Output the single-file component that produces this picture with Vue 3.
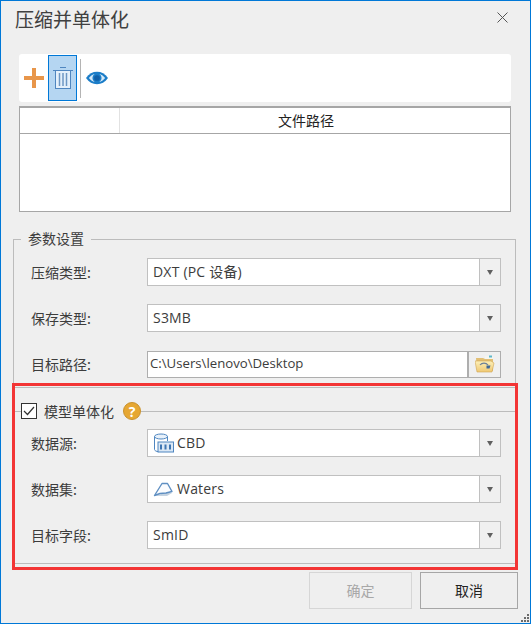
<template>
  <div class="window">
    <div class="title-row">
      <span class="title">压缩并单体化</span>
      <svg class="close" width="11" height="11" viewBox="0 0 11 11"><path d="M.5.5l10 10M10.5.5l-10 10" stroke="#555" fill="none" /></svg>
    </div>

    <div class="toolbar">
      <button class="tool add">
        <svg width="20" height="20" viewBox="0 0 20 20"><path d="M8 0h4v8h8v4h-8v8H8v-8H0V8h8z" fill="#e8964a" /></svg>
      </button>
      <button class="tool del">
        <svg width="20" height="22" viewBox="0 0 20 22" fill="none" stroke="#4f86c0">
          <path d="M0 3.500h20M7 .5h6" />
          <rect x="2.500" y="3.500" width="15" height="18" fill="#e4f0fb" />
          <path d="M6.500 6v13M10 6v13M13.500 6v13" stroke="#6d97c4" stroke-width="1.500" />
        </svg>
      </button>
      <span class="tool-sep"></span>
      <button class="tool eye">
        <svg width="23" height="14" viewBox="0 0 23 14">
          <path d="M0 7C3 2.500 7 .5 11.500 .5S20 2.500 23 7c-3 4.500-7 6.500-11.500 6.500S3 11.500 0 7z" fill="#1b7dc8" />
          <path d="M3 7c2-2.500 4-3.800 6-4.200A5 5 0 0 0 9 11.200C7 10.800 5 9.500 3 7zM20 7c-2-2.500-4-3.800-6-4.200a5 5 0 0 1 0 8.400c2-.4 4-1.700 6-4.200z" fill="#d6e9f7" />
          <circle cx="11.500" cy="7" r="3" fill="#0f5fa8" />
        </svg>
      </button>
    </div>

    <div class="file-table">
      <div class="table-head">
        <div class="col-index"></div>
        <div class="col-path">文件路径</div>
      </div>
    </div>

    <fieldset class="group">
      <legend class="legend-text">参数设置</legend>
      <div class="field" v-for="f in params" :key="f.label">
        <label>{{ f.label }}</label>
        <div class="combo">
          <span class="value">{{ f.value }}</span>
          <span class="arrow-btn"><i class="arrow"></i></span>
        </div>
      </div>
      <div class="field">
        <label>目标路径:</label>
        <div class="path-input">
          <span class="path-value">C:\Users\lenovo\Desktop</span>
          <span class="folder-btn">
            <svg width="20" height="20" viewBox="0 0 20 20">
              <defs>
                <linearGradient id="fold" x1="0" y1="0" x2="0" y2="1">
                  <stop offset="0" stop-color="#fdf0b8" />
                  <stop offset="1" stop-color="#efc873" />
                </linearGradient>
              </defs>
              <path d="M1 4h7l2 1h8v12H2z" fill="#e2bf74" />
              <path d="M10 2h7l1 3h-8z" fill="#f5f5ef" />
              <rect x="14" y="1.500" width="3" height="2" fill="#5fb7c9" />
              <path d="M0 7h16l3 2-2 9H2z" fill="url(#fold)" stroke="#d0a656" stroke-width=".6" />
              <path d="M5 11c2-2.500 6-2.500 8 0" fill="none" stroke="#6a7f98" stroke-width="1.200" />
              <path d="M11.500 11.500h4l-1 3h-3z" fill="#3f6796" />
            </svg>
          </span>
        </div>
      </div>
    </fieldset>

    <fieldset class="group model">
      <legend class="legend-check">
        <span class="check">
          <svg width="12" height="10" viewBox="0 0 12 10"><path d="M1 5l3.500 3.500L11 1" fill="none" stroke="#333" stroke-width="1.200" /></svg>
        </span>
        <span class="check-label">模型单体化</span>
        <span class="help">?</span>
      </legend>
      <div class="field">
        <label>数据源:</label>
        <div class="combo">
          <svg class="item-icon" width="21" height="20" viewBox="0 0 21 20" fill="none" stroke="#4f86c0">
            <ellipse cx="8" cy="3.500" rx="6.500" ry="2.500" fill="#e8f1fa" />
            <path d="M1.500 3.500v13c0 1.200 2 2 4 2.200M14.500 3.500V8" />
            <rect x="5" y="9" width="15.500" height="10" fill="#dbe8f5" />
            <path d="M8 11.500v5M12.500 11.500v5M17 11.500v5" stroke="#3f76b2" stroke-width="2" />
          </svg>
          <span class="value">CBD</span>
          <span class="arrow-btn"><i class="arrow"></i></span>
        </div>
      </div>
      <div class="field">
        <label>数据集:</label>
        <div class="combo">
          <svg class="item-icon" width="21" height="16" viewBox="0 0 21 16">
            <path d="M1 15h13l5-3-7 0z" fill="#c4d2e0" />
            <path d="M1.500 14.500L9 2.500h5.500l4.500 8-6 1.500-6 .5z" fill="#fbfcfe" stroke="#5f8fc2" stroke-width="1.400" stroke-linejoin="round" />
          </svg>
          <span class="value">Waters</span>
          <span class="arrow-btn"><i class="arrow"></i></span>
        </div>
      </div>
      <div class="field">
        <label>目标字段:</label>
        <div class="combo">
          <span class="value">SmID</span>
          <span class="arrow-btn"><i class="arrow"></i></span>
        </div>
      </div>
    </fieldset>

    <div class="actions">
      <button class="btn ok" disabled>确定</button>
      <button class="btn cancel">取消</button>
    </div>

    <div class="red-frame"></div>
    <svg class="grip" width="10" height="10" viewBox="0 0 10 10" fill="#6b6b6b">
      <rect x="7" y="1" width="2" height="2" />
      <rect x="4" y="4" width="2" height="2" />
      <rect x="7" y="4" width="2" height="2" />
      <rect x="1" y="7" width="2" height="2" />
      <rect x="4" y="7" width="2" height="2" />
      <rect x="7" y="7" width="2" height="2" />
    </svg>
  </div>
</template>

<script setup>
const params = [
  { label: '压缩类型:', value: 'DXT (PC 设备)' },
  { label: '保存类型:', value: 'S3MB' },
]
</script>

<style scoped>
.window {
  position: relative;
  box-sizing: border-box;
  width: 531px;
  height: 624px;
  border: 1px solid #0078d7;
  border-left-width: 1.500px;
  background: #efefef;
  color: #3c3c3c;
  font-family: "Open Sans", "Noto Sans CJK SC", sans-serif;
  font-size: 14px;
  overflow: hidden;
}

.title-row {
  display: flex;
  box-sizing: border-box;
  justify-content: space-between;
  align-items: flex-start;
  height: 53px;
  padding: 5px 22px 0 14px;
}

.title {
  font-family: "Noto Sans CJK SC", sans-serif;
  font-size: 19px;
  line-height: 26px;
  color: #404040;
}

.close {
  margin-top: 6px;
}

.toolbar {
  display: flex;
  align-items: center;
  width: 492px;
  height: 48px;
  margin-left: 18px;
  background: #fff;
  border-radius: 3px;
}

.tool {
  display: flex;
  align-items: center;
  justify-content: center;
  padding: 0;
  border: 1px solid transparent;
  background: none;
}

.add {
  width: 29px;
  height: 46px;
}

.del {
  width: 29px;
  height: 46px;
  border-color: #0078d7;
  background: #b5d6f2;
}

.tool-sep {
  width: 1px;
  height: 39px;
  margin: 0 4px 0 3px;
  background: #b4b4b4;
}

.eye {
  width: 24px;
  height: 46px;
}

.file-table {
  box-sizing: border-box;
  width: 492px;
  height: 106px;
  margin: 4px 0 0 18px;
  border: 1px solid #a6a6a6;
  border-top-width: 2px;
  background: #fff;
}

.table-head {
  display: flex;
  height: 25px;
  border-bottom: 1px solid #a6a6a6;
}

.col-index {
  width: 99px;
  border-right: 1px solid #e2e2e2;
}

.col-path {
  flex: 1;
  padding-right: 18px;
  text-align: center;
  font-family: "Noto Sans CJK SC", sans-serif;
  line-height: 25px;
  color: #222;
}

.group {
  display: flex;
  flex-direction: column;
  gap: 18px;
  box-sizing: border-box;
  width: 503px;
  margin: 17px 0 0 12px;
  padding: 9px 14px 9px 17px;
  border: 1px solid #bcbcbc;
  min-width: 0;
}

.legend-text {
  margin-left: -10px;
  padding: 0 7px;
  height: 20px;
  line-height: 18px;
  font-family: "Noto Sans CJK SC", sans-serif;
}

.field {
  display: flex;
  align-items: center;
  height: 28px;
}

.field label {
  width: 116px;
  flex: none;
  margin-top: -1px;
  font-family: "Noto Sans CJK SC", sans-serif;
  font-size: 14px;
}

.combo {
  display: flex;
  align-items: center;
  flex: 1;
  box-sizing: border-box;
  height: 28px;
  padding-left: 5px;
  border: 1px solid #c0c0c0;
  background: #fff;
}

.value {
  flex: 1;
  letter-spacing: .2px;
  margin-top: -2px;
}

.arrow-btn {
  display: flex;
  align-items: center;
  justify-content: center;
  width: 20px;
  height: 100%;
  border-left: 1px solid #c0c0c0;
  background: #f0f0f0;
}

.arrow {
  width: 0;
  height: 0;
  border: 3.500px solid transparent;
  border-top: 5px solid #606060;
  border-bottom: 0;
}

.path-input {
  display: flex;
  align-items: center;
  flex: 1;
  box-sizing: border-box;
  height: 27px;
  padding-left: 2px;
  border: 1px solid #aeaeae;
  background: #fff;
}

.path-value {
  flex: 1;
  font-size: 13.200px;
  margin-top: -2px;
}

.folder-btn {
  display: flex;
  align-items: center;
  justify-content: center;
  width: 31px;
  height: 100%;
  border-left: 2px solid #aeaeae;
  background: #f0f0f0;
}

.model {
  margin-top: 14px;
  padding-top: 9px;
  padding-bottom: 14px;
}

.legend-check {
  display: flex;
  align-items: center;
  height: 18px;
  margin-left: -10px;
  padding: 0;
}

.check {
  display: flex;
  align-items: center;
  justify-content: center;
  box-sizing: border-box;
  width: 16px;
  height: 16px;
  border: 1px solid #333;
  background: #fff;
}

.check-label {
  margin-left: 7px;
  font-family: "Noto Sans CJK SC", sans-serif;
}

.help {
  display: flex;
  align-items: center;
  justify-content: center;
  box-sizing: border-box;
  width: 18px;
  height: 18px;
  margin-left: 9px;
  border: 1px solid #c9922e;
  border-radius: 50%;
  background: #e6a733;
  color: #fff;
  font-weight: 700;
  font-size: 14px;
}

.item-icon {
  flex: none;
  margin-right: 3px;
}

.actions {
  display: flex;
  justify-content: flex-end;
  gap: 8px;
  margin: 8px 12px 0 0;
}

.btn {
  height: 37px;
  font-family: "Noto Sans CJK SC", sans-serif;
  font-size: 14px;
  background: #efefef;
  padding: 0 0 2px;
}

.ok {
  width: 103px;
  border: 1px solid #d6d6d6;
  color: #a8a8a8;
}

.cancel {
  width: 98px;
  border: 1px solid #a6a6a6;
  color: #222;
}

.red-frame {
  position: absolute;
  left: 11px;
  top: 382px;
  box-sizing: border-box;
  width: 506px;
  height: 187px;
  border: 3px solid #f33535;
  pointer-events: none;
}

.grip {
  position: absolute;
  right: 0;
  bottom: 0;
}
</style>
